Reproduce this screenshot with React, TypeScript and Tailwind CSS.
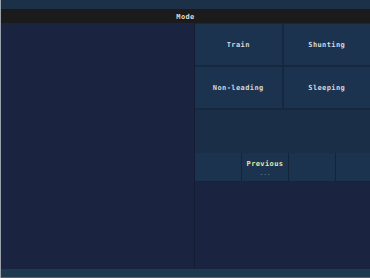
import React from "react";

const font = { fontFamily: '"DejaVu Sans Mono", "Liberation Mono", monospace' };

function Btn({ label }: { label: string }) {
  return (
    <div className="flex items-center justify-center bg-[#1c3350] pt-[2px] text-[7px] font-bold tracking-[0.4px] text-[#d4d8de]">
      {label}
    </div>
  );
}

export default function App() {
  return (
    <div className="flex h-[278px] w-[370px] flex-col overflow-hidden border-l border-[#9aa2ac] bg-[#1a2340]" style={font}>
      <div className="h-[9px] bg-[#1c3048]" />
      <div className="flex h-[14px] items-center justify-center bg-[#1b1b1b] pt-[3px] text-[7px] font-bold tracking-[0.4px] text-[#dcdcdc]">
        Mode
      </div>
      <div className="flex flex-1">
        <div className="flex-1 bg-[#1a2340]" />
        <div className="flex w-[176px] flex-col border-l border-[#141c33]">
          <div className="flex flex-col bg-[#1b2e47]">
            <div className="grid grid-cols-2 gap-[2px] bg-[#162740] pt-[1px] pb-[2px]">
              <div className="grid h-[41px] grid-cols-1"><Btn label="Train" /></div>
              <div className="grid h-[41px] grid-cols-1"><Btn label="Shunting" /></div>
              <div className="grid h-[41px] grid-cols-1"><Btn label="Non-leading" /></div>
              <div className="grid h-[41px] grid-cols-1"><Btn label="Sleeping" /></div>
            </div>
            <div className="h-[43px]" />
            <div className="grid h-[29px] grid-cols-[46px_46px_46px_1fr] gap-[1px] bg-[#15243a] pb-[1px]">
              <div className="bg-[#1c3350]" />
              <div className="flex flex-col items-center justify-center bg-[#1c3350] pt-[1px]">
                <span className="text-[7px] font-bold leading-[9px] tracking-[0.4px] text-[#e2eaa2]">Previous</span>
                <span className="mt-[1px] text-[6px] leading-[6px] text-[#8a9a80]">...</span>
              </div>
              <div className="bg-[#1c3350]" />
              <div className="bg-[#1c3350]" />
            </div>
          </div>
          <div className="flex-1 bg-[#1a2340]" />
        </div>
      </div>
      <div className="h-[8px] bg-[#1d3a4f]" />
      <div className="h-[1px] bg-[#5a6470]" />
    </div>
  );
}
